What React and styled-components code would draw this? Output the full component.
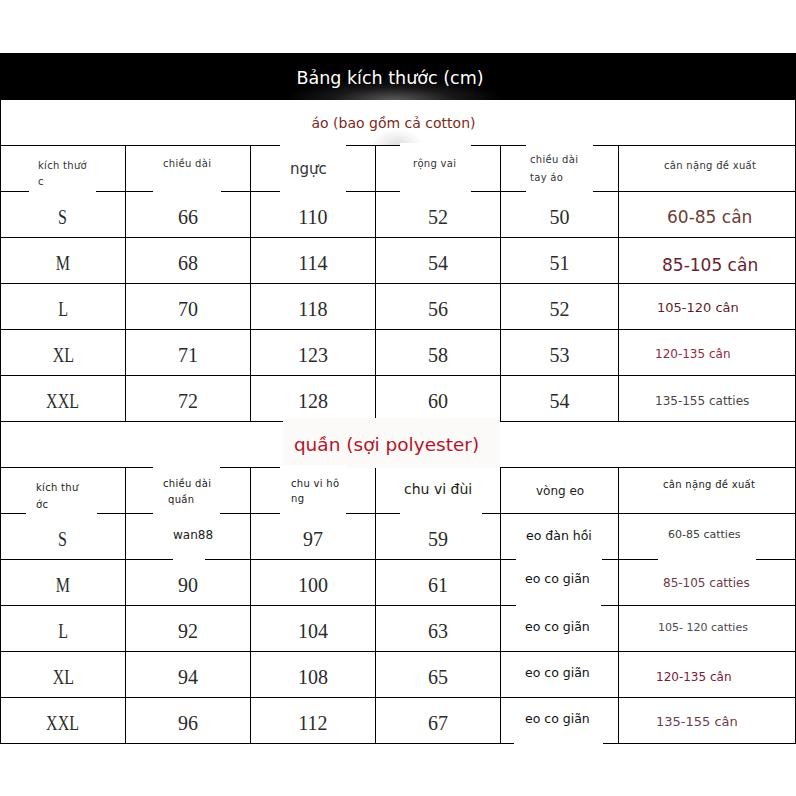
import React from "react";
import styled, { createGlobalStyle } from "styled-components";

const GlobalStyle = createGlobalStyle`
  html, body {
    margin: 0;
    padding: 0;
    background: #fff;
  }
  body {
    width: 796px;
    height: 796px;
    overflow: hidden;
  }
`;

const Sheet = styled.div`
  width: 796px;
  padding-top: 53px;
  font-family: "DejaVu Sans", "Noto Sans", sans-serif;
`;

const TitleBar = styled.div`
  height: 47px;
  box-sizing: border-box;
  display: flex;
  align-items: center;
  justify-content: center;
  padding: 3px 16px 0 0;
  background: radial-gradient(
      ellipse 110px 22px at 394px 100%,
      rgba(120, 120, 120, 0.75),
      rgba(70, 70, 70, 0.35) 55%,
      transparent 100%
    ),
    #000;
  color: #fff;
  font-size: 17.5px;
`;

const Table = styled.div`
  display: grid;
  grid-template-columns: 125px 125px 125px 125px 118px 177px;
  grid-auto-rows: 46px;
  border-left: 1px solid #000;
`;

const Caption = styled.div`
  grid-column: 1 / -1;
  position: relative;
  box-sizing: border-box;
  border-right: 1px solid #000;
  border-bottom: 1px solid #000;
  display: flex;
  align-items: center;
  justify-content: center;
  padding-right: ${(p) => p.$shift}px;
  background: ${(p) =>
    p.$glow
      ? "radial-gradient(ellipse 26px 16px at 396px 100%, rgba(0,0,0,0.13), transparent)"
      : "#fff"};
`;

const CaptionText = styled.span`
  position: relative;
  z-index: 2;
  font-size: ${(p) => p.$size}px;
  color: ${(p) => p.$color};
`;

const Cell = styled.div`
  position: relative;
  box-sizing: border-box;
  border-right: 1px solid #000;
  border-bottom: 1px solid #000;
  display: flex;
  align-items: flex-start;
  justify-content: ${(p) => (p.$x == null ? "center" : "flex-start")};
  padding-left: ${(p) => p.$x ?? 0}px;
  padding-top: ${(p) => p.$y}px;
`;

const Patch = styled.span`
  position: absolute;
  z-index: 1;
  left: ${(p) => p.$l}px;
  top: ${(p) => p.$t}px;
  width: ${(p) => p.$w}px;
  height: ${(p) => p.$h}px;
  background: ${(p) => p.$bg || "#fff"};
`;

const Num = styled.span`
  position: relative;
  z-index: 2;
  display: inline-block;
  font-family: "Liberation Serif", "DejaVu Serif", serif;
  font-size: 20px;
  line-height: 24px;
  color: #2b2b2b;
`;

const SizeMark = styled(Num)`
  transform: scaleX(0.8);
`;

const Label = styled.div`
  position: relative;
  z-index: 2;
  font-size: ${(p) => p.$size}px;
  line-height: ${(p) => p.$lh}px;
  letter-spacing: ${(p) => p.$ls}px;
  color: ${(p) => p.$color};
  white-space: nowrap;
`;

const Line = styled.div`
  padding-left: ${(p) => p.$indent || 0}px;
`;

const size = (text) => ({ kind: "size", text });
const num = (text) => ({ kind: "num", text });

const head = (lines, x, y, extra = {}) => ({
  kind: "label",
  lines,
  x,
  y,
  size: 10,
  lh: 16,
  ls: 0.3,
  ...extra,
});

const label = (text, x, y, fontSize, color, extra = {}) => ({
  kind: "label",
  lines: [text],
  x,
  y,
  size: fontSize,
  lh: fontSize >= 17 ? 22 : fontSize >= 13 ? 18 : 16,
  ls: 0,
  color,
  ...extra,
});

const shirtHead = [
  head(["kích thướ", "c"], 37, 12, { color: "#333", patch: [28, 8, 67, 40] }),
  head(["chiều dài"], 37, 10, { color: "#333", patch: [27, 8, 68, 40] }),
  head(["ngực"], 39, 13, { color: "#333", size: 15, lh: 20, ls: 0, patch: [29, -3, 66, 51] }),
  head(["rộng vai"], 37, 10, { color: "#333", patch: [24, -3, 71, 51] }),
  head(["chiều dài", "tay áo"], 29, 5, { color: "#333", lh: 18, patch: [25, -3, 67, 51] }),
  head(["cân nặng đề xuất"], 45, 12, { color: "#333" }),
];

const shirtRows = [
  [size("S"), num("66"), num("110"), num("52"), num("50"), label("60-85 cân", 48, 14, 17, "#6e3d33")],
  [size("M"), num("68"), num("114"), num("54"), num("51"), label("85-105 cân", 43, 16, 17, "#6a2230")],
  [size("L"), num("70"), num("118"), num("56"), num("52"), label("105-120 cân", 38, 15, 13, "#5e1f2a")],
  [size("XL"), num("71"), num("123"), num("58"), num("53"), label("120-135 cân", 36, 16, 12, "#93283e")],
  [size("XXL"), num("72"), num("128"), num("60"), num("54"), label("135-155 catties", 36, 17, 12, "#4d4444")],
];

const pantsHead = [
  head(["kích thư", "ớc"], 35, 11, { color: "#222", lh: 17, patch: [25, 8, 71, 40] }),
  head(["chiều dài", "quần"], 37, 8, { color: "#222", indent: 5, patch: [27, -3, 67, 51] }),
  head(["chu vi hô", "ng"], 40, 8, { color: "#222", lh: 15, patch: [29, -3, 66, 51] }),
  head(["chu vi đùi"], 28, 12, { color: "#222", size: 14, lh: 18, ls: 0, patch: [24, 8, 82, 40] }),
  head(["vòng eo"], 35, 15, { color: "#222", size: 12, ls: 0 }),
  head(["cân nặng đề xuất"], 44, 9, { color: "#222" }),
];

const waist = (text, y, patch) => label(text, 24, y, 12.5, "#111", patch ? { patch } : {});

const pantsRows = [
  [
    size("S"),
    label("wan88", 47, 13, 12, "#222", { patch: [47, 36, 32, 12] }),
    num("97"),
    num("59"),
    label("eo đàn hồi", 25, 14, 12.5, "#111", { patch: [15, 30, 86, 20] }),
    label("60-85 catties", 49, 13, 11, "#3c3c3c", { patch: [39, 30, 98, 20] }),
  ],
  [size("M"), num("90"), num("100"), num("61"), waist("eo co giãn", 11, [15, 28, 85, 21]), label("85-105 catties", 44, 15, 12, "#6e3a48")],
  [size("L"), num("92"), num("104"), num("63"), waist("eo co giãn", 13), label("105- 120 catties", 39, 14, 11, "#4a4a52")],
  [size("XL"), num("94"), num("108"), num("65"), waist("eo co giãn", 13), label("120-135 cân", 37, 17, 12, "#7a1838")],
  [size("XXL"), num("96"), num("112"), num("67"), waist("eo co giãn", 13, [13, 30, 89, 20]), label("135-155 cân", 37, 15, 13, "#6e3e4a")],
];

const renderCell = (c, i) => (
  <Cell key={i} $x={c.x} $y={c.y ?? 13}>
    {c.patch && <Patch $l={c.patch[0]} $t={c.patch[1]} $w={c.patch[2]} $h={c.patch[3]} />}
    {c.kind === "size" && <SizeMark>{c.text}</SizeMark>}
    {c.kind === "num" && <Num>{c.text}</Num>}
    {c.kind === "label" && (
      <Label $size={c.size} $lh={c.lh} $ls={c.ls} $color={c.color}>
        {c.lines.map((line, j) => (
          <Line key={j} $indent={j > 0 ? c.indent : 0}>
            {line}
          </Line>
        ))}
      </Label>
    )}
  </Cell>
);

const App = () => (
  <>
    <GlobalStyle />
    <Sheet>
      <TitleBar>Bảng kích thước (cm)</TitleBar>
      <Table>
        <Caption $shift={9} $glow>
          <CaptionText $size={14} $color="#7b2a1c">
            áo (bao gồm cả cotton)
          </CaptionText>
        </Caption>
        {shirtHead.map(renderCell)}
        {shirtRows.map((row) => row.map(renderCell))}

        <Caption $shift={23}>
          <Patch $l={282} $t={-4} $w={217} $h={50} $bg="#fcf9f9" />
          <CaptionText $size={18.5} $color="#b3162a">
            quần (sợi polyester)
          </CaptionText>
        </Caption>
        {pantsHead.map(renderCell)}
        {pantsRows.map((row) => row.map(renderCell))}
      </Table>
    </Sheet>
  </>
);

export default App;
